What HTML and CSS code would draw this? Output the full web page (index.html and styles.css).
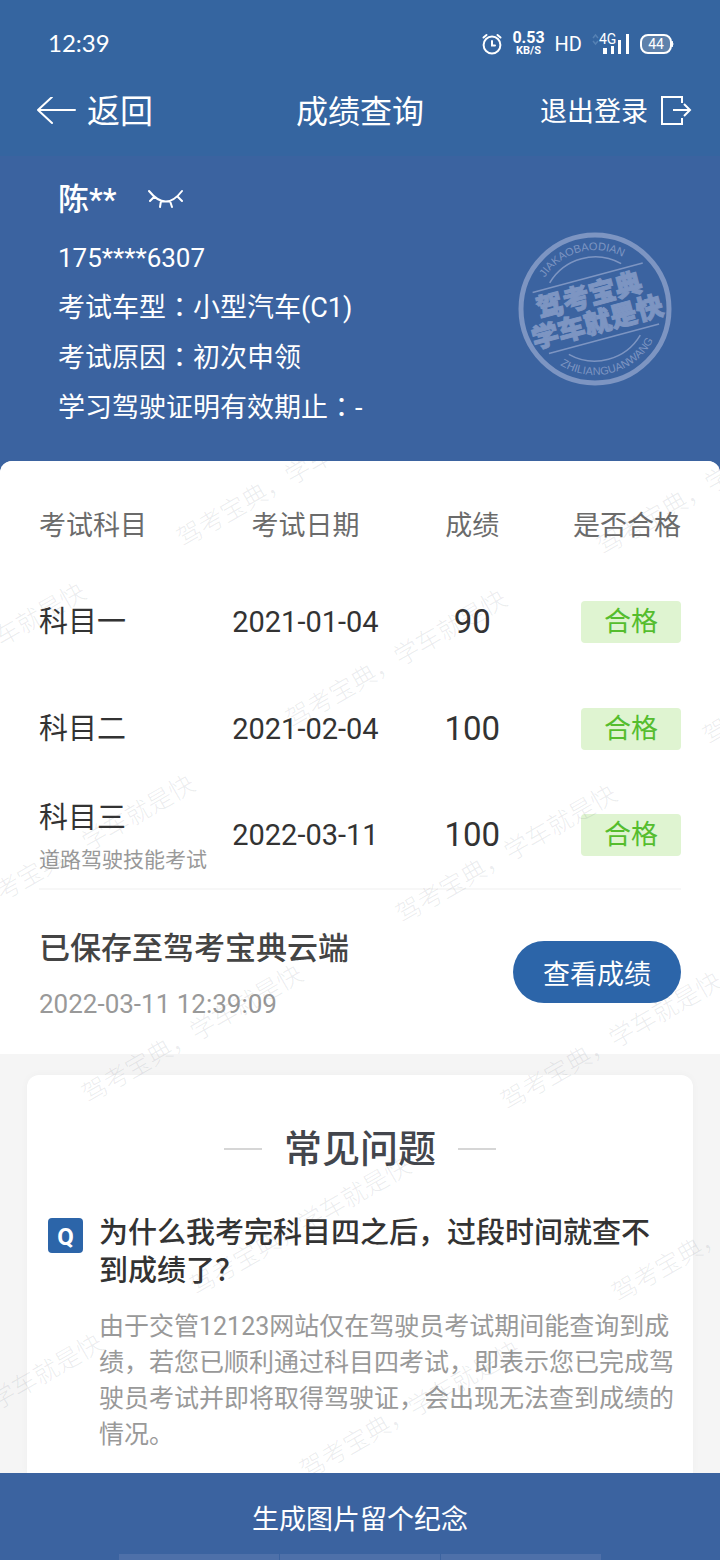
FILE: index.html
```html
<!DOCTYPE html>
<html lang="zh-CN">
<head>
<meta charset="utf-8">
<meta name="viewport" content="width=device-width, initial-scale=1">
<title>成绩查询</title>
<link rel="stylesheet" href="styles.css">
</head>
<body>
<header class="top">
  <div class="status">
    <span class="clock">12:39</span>
    <div class="status-icons">
      <svg class="alarm" viewBox="0 0 20 22" width="20" height="22" fill="none" stroke="currentColor" stroke-width="2" stroke-linecap="round"><circle cx="10" cy="12" r="8.4"/><path d="M10 8v4.500h3M1.500 4.500 4.500 2M18.500 4.500 15.500 2"/></svg>
      <span class="speed"><b>0.53</b><small>KB/S</small></span>
      <span class="hd">HD</span>
      <svg class="signal" viewBox="0 0 38 24" width="38" height="24">
        <path d="M1 6l2.500-3L6 6M1 9l2.500 3L6 9" fill="none" stroke="#5580b3" stroke-width="1.500"/>
        <text x="7" y="12" class="net">4G</text>
        <path d="M11 16h4v6h-4zM19 14h3v8h-3zM26 8h3v14h-3zM34 2h3v20h-3z" fill="currentColor"/>
      </svg>
      <svg class="battery" viewBox="0 0 34 20" width="34" height="20">
        <rect x="1" y="1" width="30" height="18" rx="7" fill="#5e81ab" stroke="currentColor" stroke-width="2"/>
        <path d="M32 7q2 3 0 6z" fill="currentColor" stroke="currentColor"/>
        <text x="16" y="15" text-anchor="middle" class="level">44</text>
      </svg>
    </div>
  </div>
  <nav class="nav">
    <button class="nav-btn back" type="button">
      <svg viewBox="0 0 40 30" width="40" height="30" fill="none" stroke="currentColor" stroke-width="2" stroke-linecap="round" stroke-linejoin="round"><path d="M38 13H1M15 0 1 13l14 13"/></svg>
      <span>返回</span>
    </button>
    <h1 class="title">成绩查询</h1>
    <button class="nav-btn logout" type="button">
      <span>退出登录</span>
      <svg viewBox="0 0 32 32" width="32" height="32" fill="none" stroke="currentColor" stroke-width="2"><path d="M22 7V1H2v27h20v-6M13 14h17M24 8l6 6-6 6"/></svg>
    </button>
  </nav>
</header>

<section class="profile">
  <div class="person">
    <div class="name-row">
      <h2 class="name">陈**</h2>
      <button class="eye" type="button" aria-label="显示姓名">
        <svg viewBox="0 0 36 22" width="36" height="22" fill="none" stroke="currentColor" stroke-width="2" stroke-linecap="round"><path d="M1 2q17 21 33 0M6 8l-4 4M13 12l-1 6M22 12l2 6M30 8l4 4"/></svg>
      </button>
    </div>
    <p class="phone">175****6307</p>
    <p>考试车型<span class="colon" lang="zh-TW">：</span>小型汽车(C1)</p>
    <p>考试原因<span class="colon" lang="zh-TW">：</span>初次申领</p>
    <p>学习驾驶证明有效期止<span class="colon" lang="zh-TW">：</span>-</p>
  </div>
  <svg class="stamp" viewBox="-77 -77 154 154" width="154" height="154">
    <defs>
      <path id="arc-top" d="M-59 0A59 59 0 0 1 59 0"/>
      <path id="arc-bottom" d="M-66 0A66 66 0 0 0 66 0"/>
    </defs>
    <circle r="74" fill="none" stroke="currentColor" stroke-width="5"/>
    <g transform="rotate(-15)">
      <path d="M-37-37A53 53 0 0 1 37-37M-37 37A53 53 0 0 0 37 37M-56-32H58M-56 31H58" fill="none" stroke="currentColor" stroke-width="1.500"/>
      <text class="ring"><textPath href="#arc-top" startOffset="50%">JIAKAOBAODIAN</textPath></text>
      <text class="ring"><textPath href="#arc-bottom" startOffset="50%">ZHILIANGUANWANG</textPath></text>
      <text class="slogan" x="-2" y="-5">驾考宝典</text>
      <text class="slogan" x="-1" y="23">学车就是快</text>
    </g>
  </svg>
</section>

<main class="content">
  <section class="results">
    <table class="scores">
      <thead>
        <tr><th class="c-subject">考试科目</th><th class="c-date">考试日期</th><th class="c-score">成绩</th><th class="c-pass">是否合格</th></tr>
      </thead>
      <tbody>
        <tr><td>科目一</td><td class="c-date">2021-01-04</td><td class="c-score">90</td><td class="c-pass"><span class="badge">合格</span></td></tr>
        <tr><td>科目二</td><td class="c-date">2021-02-04</td><td class="c-score">100</td><td class="c-pass"><span class="badge">合格</span></td></tr>
        <tr><td class="with-sub">科目三<small class="sub">道路驾驶技能考试</small></td><td class="c-date">2022-03-11</td><td class="c-score">100</td><td class="c-pass"><span class="badge">合格</span></td></tr>
      </tbody>
    </table>
    <div class="saved">
      <div class="saved-text">
        <h2 class="saved-title">已保存至驾考宝典云端</h2>
        <time class="saved-time">2022-03-11 12:39:09</time>
      </div>
      <button class="view" type="button">查看成绩</button>
    </div>
  </section>

  <section class="faq">
    <div class="faq-card">
      <h2 class="faq-title">常见问题</h2>
      <article class="qa">
        <span class="q">Q</span>
        <div>
          <h3 class="question">为什么我考完科目四之后，过段时间就查不到成绩了？</h3>
          <p class="answer">由于交管12123网站仅在驾驶员考试期间能查询到成绩，若您已顺利通过科目四考试，即表示您已完成驾驶员考试并即将取得驾驶证，会出现无法查到成绩的情况。</p>
        </div>
      </article>
    </div>
  </section>

  <svg class="watermark" aria-hidden="true">
    <defs><text id="mark" transform="rotate(-30)" x="-13" y="11">驾考宝典，学车就是快</text></defs>
    <use href="#mark" x="189" y="71"/><use href="#mark" x="609" y="79"/>
    <use href="#mark" x="-123" y="245"/><use href="#mark" x="298" y="252"/><use href="#mark" x="715" y="269"/>
    <use href="#mark" x="-14" y="437"/><use href="#mark" x="408" y="447"/>
    <use href="#mark" x="94" y="627"/><use href="#mark" x="513" y="634"/>
    <use href="#mark" x="202" y="819"/><use href="#mark" x="624" y="826"/>
    <use href="#mark" x="-106" y="996"/><use href="#mark" x="312" y="1003"/>
  </svg>
</main>

<footer class="bottom">
  <button class="make" type="button">生成图片留个纪念</button>
  <div class="gestures"><i></i><i></i><i></i></div>
</footer>
</body>
</html>
```
FILE: styles.css
```css
* { box-sizing: border-box; }

body {
  margin: 0;
  min-height: 100vh;
  display: flex;
  flex-direction: column;
  background: #3b63a0;
  color: #333;
  font-family: Roboto, "Noto Sans CJK SC", sans-serif;
  font-size: 27px;
}

h1, h2, h3, p { margin: 0; font-weight: 400; }

button {
  border: 0;
  padding: 0;
  background: none;
  color: inherit;
  font: inherit;
  cursor: pointer;
}

svg { display: block; flex: none; }

.top { background: #3565a0; color: #fff; }

.status {
  display: flex;
  align-items: center;
  justify-content: space-between;
  height: 68px;
  padding: 20px 46px 0 48px;
}

.clock { font: 24px/1 Lato, sans-serif; padding-bottom: 2px; }

.status-icons { display: flex; align-items: center; gap: 10px; }

.speed { display: grid; justify-items: center; }
.speed b { font-size: 16px; font-weight: 700; line-height: 13px; }
.speed small { font-size: 11px; font-weight: 700; line-height: 13px; }

.hd { font-size: 20px; line-height: 24px; }
.net { font: 14px Roboto, sans-serif; fill: currentColor; }
.level { font: 14px Roboto, sans-serif; fill: currentColor; }

.nav {
  display: grid;
  grid-template-columns: 1fr auto 1fr;
  align-items: center;
  height: 88px;
  padding: 0 28px;
}

.nav-btn { display: flex; align-items: center; gap: 12px; line-height: 40px; }
.back { justify-self: start; gap: 10px; padding-left: 9px; font-size: 33px; }
.logout { justify-self: end; }
.title { font-size: 32px; line-height: 40px; }

.profile {
  display: flex;
  align-items: center;
  justify-content: space-between;
  padding: 17px 48px 28px 58px;
  color: #fff;
}

.person p { line-height: 50px; }
.person .phone { font-size: 26px; }
.name-row { display: flex; align-items: center; gap: 31px; height: 60px; padding-bottom: 6px; }
.name { font-size: 31px; font-weight: 500; line-height: 50px; }
.person .colon { font-family: "Noto Sans CJK TC", sans-serif; line-height: 1; }

.stamp { margin-top: 12px; color: #7d95c2; }
.ring { font: 11px "Liberation Sans", sans-serif; fill: currentColor; text-anchor: middle; }
.slogan {
  font: 900 27px "Noto Sans CJK SC", sans-serif;
  fill: currentColor;
  stroke: currentColor;
  stroke-width: 1px;
  text-anchor: middle;
}

.content {
  position: relative;
  flex: 1;
  display: flex;
  flex-direction: column;
  overflow: hidden;
  border-radius: 12px 12px 0 0;
  background: #f5f5f5;
}

.results { padding: 23px 39px 0; background: #fff; }

.scores {
  width: 100%;
  table-layout: fixed;
  border-collapse: collapse;
  border-bottom: 2px solid #f7f7f7;
}
.scores th, .scores td { padding: 0; text-align: left; line-height: 42px; }
.scores th { height: 84px; color: #6b6b6b; font-weight: 400; }
.scores td { height: 107px; font-size: 29px; }
.c-subject { width: 27%; }
th.c-date { width: 29%; }
th.c-score { width: 23%; }
.scores .c-date, .scores .c-score { text-align: center; }
.scores .c-pass { text-align: right; }
.scores td.c-score { font-size: 33px; }
.scores td.with-sub { padding-top: 8px; }

.sub { display: block; color: #999; font-size: 21px; }

.badge {
  display: inline-block;
  width: 100px;
  border-radius: 4px;
  background: #dff4d1;
  color: #55bd2e;
  font-size: 27px;
  line-height: 42px;
  text-align: center;
  vertical-align: top;
}

.saved {
  display: flex;
  align-items: center;
  justify-content: space-between;
  height: 164px;
}
.saved-text { padding-top: 8px; }
.saved-title { color: #444; font-size: 31px; font-weight: 500; line-height: 56px; }
.saved-time { display: block; color: #999; font-size: 26px; line-height: 54px; }

.view {
  width: 168px;
  height: 62px;
  border-radius: 31px;
  background: #2c65a9;
  color: #fff;
}

.faq { flex: 1; display: flex; padding: 21px 27px 0; }
.faq-card {
  flex: 1;
  padding: 46px 16px 20px 21px;
  border-radius: 12px 12px 0 0;
  background: #fff;
  box-shadow: 0 0 8px rgba(0, 0, 0, .03);
}

.faq-title {
  display: flex;
  align-items: center;
  justify-content: center;
  gap: 22px;
  padding-right: 5px;
  color: #43464d;
  font-size: 38px;
  font-weight: 500;
  line-height: 56px;
}
.faq-title::before, .faq-title::after { content: ""; width: 38px; height: 2px; background: #d6d6d6; }

.qa { display: flex; gap: 16px; margin-top: 37px; }
.q {
  flex: none;
  width: 35px;
  height: 35px;
  margin-top: 4px;
  border-radius: 4px;
  background: #2c65a9;
  color: #fff;
  font: 700 24px/38px Roboto, sans-serif;
  text-align: center;
}
.question { font-size: 29px; font-weight: 500; line-height: 38px; }
.answer { margin-top: 19px; color: #999; font-size: 25px; line-height: 36px; }

.watermark {
  position: absolute;
  inset: 0;
  width: 100%;
  height: 100%;
  pointer-events: none;
  fill: rgba(60, 70, 85, .1);
  font: 300 25px "Noto Sans CJK SC", sans-serif;
}

.bottom {
  position: sticky;
  bottom: 0;
  background: #3b63a0;
  color: #fff;
}
.make { display: block; width: 100%; height: 81px; padding-top: 8px; }
.gestures { display: flex; gap: 1px; width: 67%; height: 6px; margin: 0 auto; }
.gestures i { flex: 1; background: #4e70a9; }
```
